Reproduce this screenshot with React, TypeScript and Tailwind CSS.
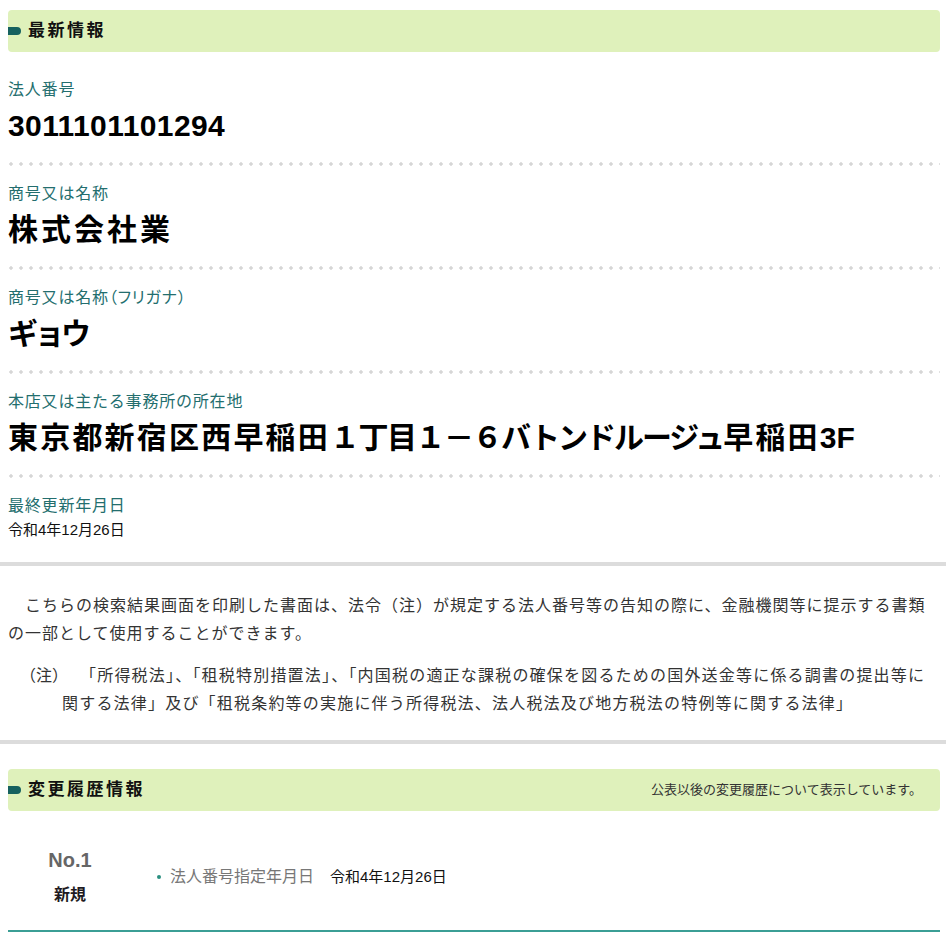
const Dots = (): JSX.Element => (
	<div className="h-1 bg-[radial-gradient(circle,#d6d6d6_1.5px,transparent_1.8px)] bg-[length:10px_4px] bg-[position:-2px_0] bg-repeat-x" />
);

const SectionHead = ({ title, note }: { title: string; note?: string }): JSX.Element => (
	<div className="flex h-[42px] items-center justify-between rounded-[4px] bg-[#dff1bb] pr-[18px]">
		<div className="flex items-center">
			<span className="h-2 w-[13px] rounded-r-full bg-[#16615f]" />
			<h2 className="ml-[7px] text-[17px] font-bold tracking-[2.5px] text-[#111]">{title}</h2>
		</div>
		{note && <p className="text-[13px] text-[#333]">{note}</p>}
	</div>
);

const Item = ({ label, children }: { label: React.ReactNode; children: React.ReactNode }): JSX.Element => (
	<div className="pt-[17px]">
		<p className="text-[16px] leading-[22px] tracking-[0.8px] text-[#236e6e]">{label}</p>
		<div className="mt-[5px] text-[30px] font-bold leading-[40px] text-black">{children}</div>
		<div className="pt-[16px]">
			<Dots />
		</div>
	</div>
);

const App = (): JSX.Element => {
	return (
		<div className="min-h-screen bg-white font-['Liberation_Sans','Noto_Sans_CJK_JP',sans-serif] text-[#222]">
			{/* 最新情報 */}
			<section className="pl-2 pr-[6px] pt-[10px]">
				<SectionHead title="最新情報" />
				<div className="mt-[10px]">
					<Item label="法人番号">
						<span className="tracking-[0.4px]">3011101101294</span>
					</Item>
					<Item label="商号又は名称">
						<span className="tracking-[3px]">株式会社業</span>
					</Item>
					<Item
						label={
							<>
								商号又は名称<span className="[font-feature-settings:'palt']">（フリガナ）</span>
							</>
						}
					>
						<span className="tracking-[-3.5px]">ギョウ</span>
					</Item>
					<Item label="本店又は主たる事務所の所在地">
						<span className="tracking-[2.2px]">東京都新宿区西早稲田</span>
						<span className="tracking-[-1.5px]">１丁目１－６</span>
						<span className="tracking-[-2px]">バトンドルージュ</span>
						<span className="tracking-[2.2px]">早稲田</span>
						<span>3F</span>
					</Item>
					<div className="pb-[21px] pt-[17px]">
						<p className="text-[16px] leading-[22px] tracking-[0.8px] text-[#236e6e]">最終更新年月日</p>
						<p className="mt-[2px] text-[15px] leading-[22px] text-[#111]">令和4年12月26日</p>
					</div>
				</div>
			</section>

			<div className="h-1 bg-[#dcdcdc]" />

			{/* 注意書き */}
			<section className="pl-2 pr-[6px] pb-[22px] pt-[26px] text-[16px] leading-[28px] text-[#333]">
				<p className="tracking-[1px]">
					{'\u3000'}こちらの検索結果画面を印刷した書面は、法令（注）が規定する法人番号等の告知の際に、金融機関等に提示する書類
					<br />
					の一部として使用することができます。
				</p>
				<p className="mt-[14px] pl-[54px] -indent-[42px] tracking-[1.2px]">
					<span className="inline-block w-[60px] indent-0 tracking-normal">（注）</span>
					「所得税法」、「租税特別措置法」、「内国税の適正な課税の確保を図るための国外送金等に係る調書の提出等に
					<br />
					関する法律」及び「租税条約等の実施に伴う所得税法、法人税法及び地方税法の特例等に関する法律」
				</p>
			</section>

			<div className="h-1 bg-[#dcdcdc]" />

			{/* 変更履歴情報 */}
			<section className="pl-2 pr-[6px] pt-[25px]">
				<SectionHead title="変更履歴情報" note="公表以後の変更履歴について表示しています。" />
				<div className="flex items-center pb-[23px] pt-[35px]">
					<div className="flex w-[124px] flex-col items-center">
						<p className="text-[20px] font-bold leading-[28px] text-[#666]">No.1</p>
						<p className="mt-[9px] text-[16px] font-bold leading-[24px] text-[#1e1a22]">新規</p>
					</div>
					<div className="ml-[25px] flex items-center text-[16px] leading-[24px]">
						<span className="h-1 w-1 rounded-full bg-[#2a8f80]" />
						<span className="ml-[9px] text-[#777]">法人番号指定年月日</span>
						<span className="ml-4 text-[15px] text-[#111]">令和4年12月26日</span>
					</div>
				</div>
				<div className="h-[2px] bg-[#3b9e95]" />
			</section>
		</div>
	);
};

export default App;
